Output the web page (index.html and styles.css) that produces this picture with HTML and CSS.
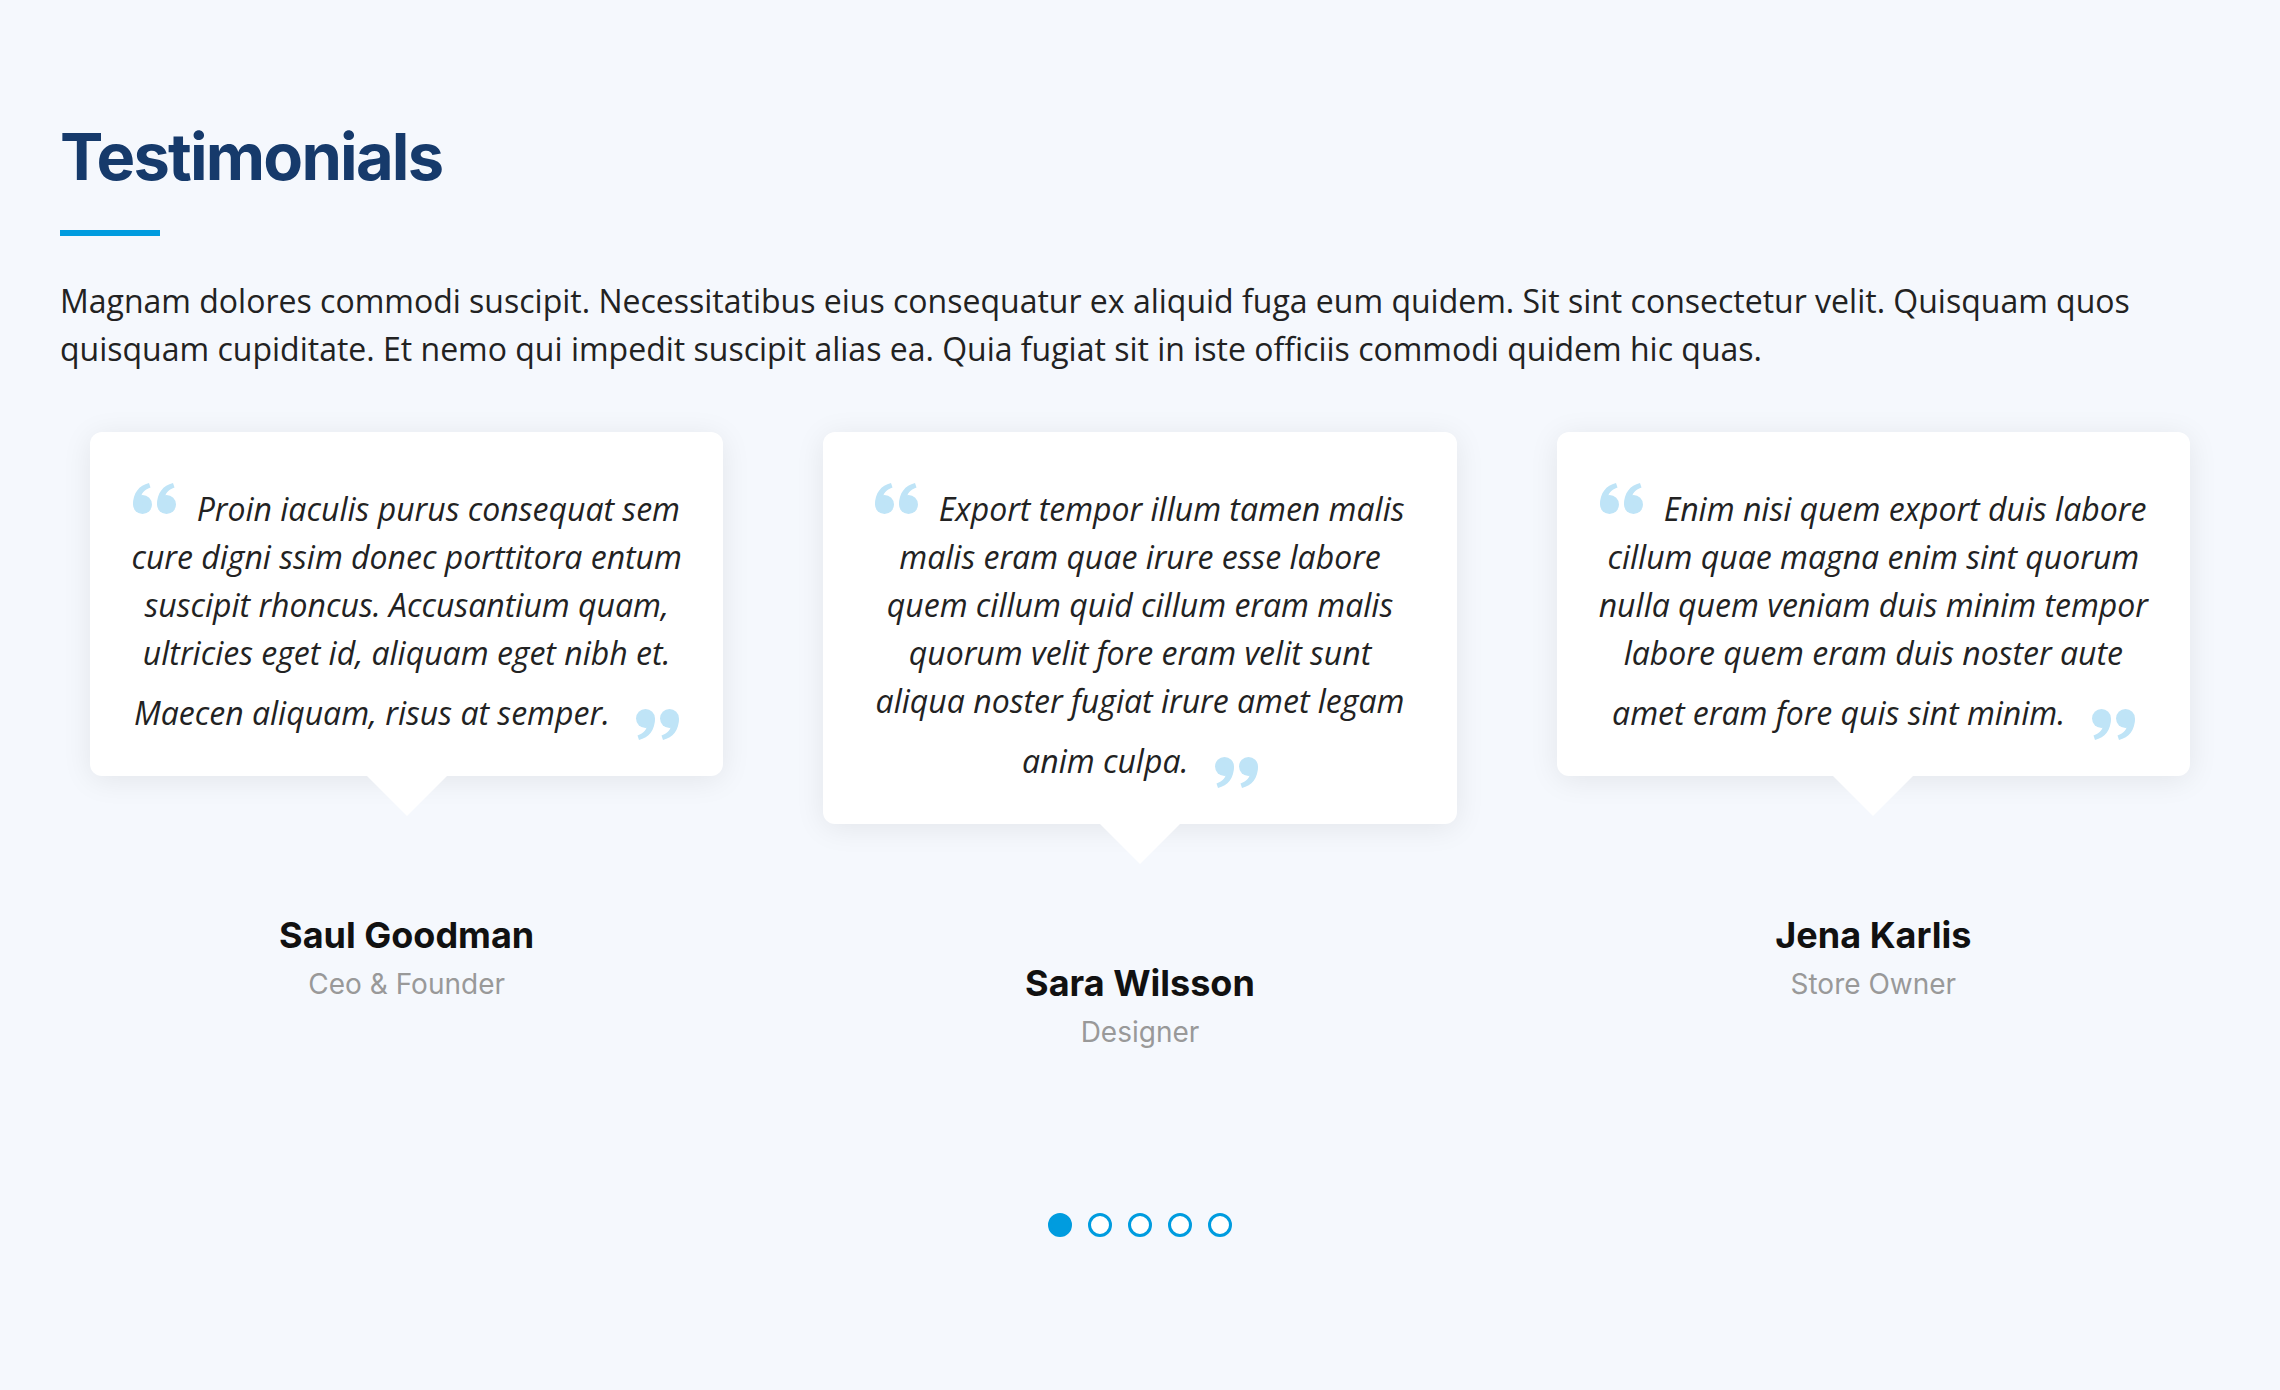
FILE: index.html
```html
<!DOCTYPE html>
<html lang="en">
<head>
<meta charset="utf-8">
<title>Testimonials</title>
<link rel="stylesheet" href="styles.css">
</head>
<body>
<section class="testimonials">
  <div class="container">
    <div class="section-title">
      <h2>Testimonials</h2>
      <p>Magnam dolores commodi suscipit. Necessitatibus eius consequatur ex aliquid fuga eum quidem. Sit sint consectetur velit. Quisquam quos quisquam cupiditate. Et nemo qui impedit suscipit alias ea. Quia fugiat sit in iste officiis commodi quidem hic quas.</p>
    </div>

    <div class="carousel">
      <div class="item">
        <p class="quote">
          <svg class="q-left" viewBox="0 0 45 31" width="45" height="31" aria-hidden="true"><g fill="#bfe4f7"><circle cx="9.5" cy="21.5" r="9.5"/><path d="M0 21.5C0 10 6 2.5 16 0L17.5 4.5C11 7 8 11 8.5 14L9.5 21.5Z"/><circle cx="33.5" cy="21.5" r="9.5"/><path d="M24 21.5C24 10 30 2.5 40 0L41.5 4.5C35 7 32 11 32.5 14L33.5 21.5Z"/></g></svg>
          Proin iaculis purus consequat sem cure digni ssim donec porttitora entum suscipit rhoncus. Accusantium quam, ultricies eget id, aliquam eget nibh et. Maecen aliquam, risus at semper.
          <svg class="q-right" viewBox="0 0 45 31" width="45" height="31" aria-hidden="true"><g fill="#bfe4f7" transform="rotate(180 22.5 15.5)"><circle cx="9.5" cy="21.5" r="9.5"/><path d="M0 21.5C0 10 6 2.5 16 0L17.5 4.5C11 7 8 11 8.5 14L9.5 21.5Z"/><circle cx="33.5" cy="21.5" r="9.5"/><path d="M24 21.5C24 10 30 2.5 40 0L41.5 4.5C35 7 32 11 32.5 14L33.5 21.5Z"/></g></svg>
        </p>
        <h3>Saul Goodman</h3>
        <h4>Ceo &amp; Founder</h4>
      </div>

      <div class="item">
        <p class="quote">
          <svg class="q-left" viewBox="0 0 45 31" width="45" height="31" aria-hidden="true"><g fill="#bfe4f7"><circle cx="9.5" cy="21.5" r="9.5"/><path d="M0 21.5C0 10 6 2.5 16 0L17.5 4.5C11 7 8 11 8.5 14L9.5 21.5Z"/><circle cx="33.5" cy="21.5" r="9.5"/><path d="M24 21.5C24 10 30 2.5 40 0L41.5 4.5C35 7 32 11 32.5 14L33.5 21.5Z"/></g></svg>
          Export tempor illum tamen malis malis eram quae irure esse labore quem cillum quid cillum eram malis quorum velit fore eram velit sunt aliqua noster fugiat irure amet legam anim culpa.
          <svg class="q-right" viewBox="0 0 45 31" width="45" height="31" aria-hidden="true"><g fill="#bfe4f7" transform="rotate(180 22.5 15.5)"><circle cx="9.5" cy="21.5" r="9.5"/><path d="M0 21.5C0 10 6 2.5 16 0L17.5 4.5C11 7 8 11 8.5 14L9.5 21.5Z"/><circle cx="33.5" cy="21.5" r="9.5"/><path d="M24 21.5C24 10 30 2.5 40 0L41.5 4.5C35 7 32 11 32.5 14L33.5 21.5Z"/></g></svg>
        </p>
        <h3>Sara Wilsson</h3>
        <h4>Designer</h4>
      </div>

      <div class="item">
        <p class="quote">
          <svg class="q-left" viewBox="0 0 45 31" width="45" height="31" aria-hidden="true"><g fill="#bfe4f7"><circle cx="9.5" cy="21.5" r="9.5"/><path d="M0 21.5C0 10 6 2.5 16 0L17.5 4.5C11 7 8 11 8.5 14L9.5 21.5Z"/><circle cx="33.5" cy="21.5" r="9.5"/><path d="M24 21.5C24 10 30 2.5 40 0L41.5 4.5C35 7 32 11 32.5 14L33.5 21.5Z"/></g></svg>
          Enim nisi quem export duis labore cillum quae magna enim sint quorum nulla quem veniam duis minim tempor labore quem eram duis noster aute amet eram fore quis sint minim.
          <svg class="q-right" viewBox="0 0 45 31" width="45" height="31" aria-hidden="true"><g fill="#bfe4f7" transform="rotate(180 22.5 15.5)"><circle cx="9.5" cy="21.5" r="9.5"/><path d="M0 21.5C0 10 6 2.5 16 0L17.5 4.5C11 7 8 11 8.5 14L9.5 21.5Z"/><circle cx="33.5" cy="21.5" r="9.5"/><path d="M24 21.5C24 10 30 2.5 40 0L41.5 4.5C35 7 32 11 32.5 14L33.5 21.5Z"/></g></svg>
        </p>
        <h3>Jena Karlis</h3>
        <h4>Store Owner</h4>
      </div>
    </div>

    <div class="dots">
      <span class="dot active"></span>
      <span class="dot"></span>
      <span class="dot"></span>
      <span class="dot"></span>
      <span class="dot"></span>
    </div>
  </div>
</section>
</body>
</html>
```

FILE: styles.css
```css
* { box-sizing: border-box; }

html, body {
  margin: 0;
  padding: 0;
  background: #f5f8fd;
}

body {
  font-family: "Open Sans", "Liberation Sans", sans-serif;
  color: #222;
  min-height: 1390px;
}

.testimonials {
  padding: 118px 60px 120px;
}

.section-title h2 {
  position: relative;
  margin: 0;
  padding-bottom: 40px;
  font-family: Inter, "Open Sans", sans-serif;
  font-size: 65px;
  line-height: 78px;
  font-weight: 700;
  color: #163a6b;
  letter-spacing: -1.8px;
}

.section-title h2::after {
  content: "";
  position: absolute;
  left: 0;
  bottom: 0;
  width: 100px;
  height: 6px;
  background: #009cdf;
}

.section-title p {
  margin: 41px 0 0;
  font-size: 32px;
  line-height: 48px;
  color: #222;
}

.carousel {
  display: grid;
  grid-template-columns: repeat(3, 1fr);
  column-gap: 100px;
  align-items: start;
  padding: 0 30px;
  margin-top: 59px;
}

.item {
  text-align: center;
}

.quote {
  position: relative;
  margin: 0;
  padding: 51px 38px 36px;
  background: #fff;
  border-radius: 12px;
  box-shadow: 0 4px 30px rgba(0, 0, 0, 0.08);
  font-style: italic;
  font-size: 32px;
  line-height: 48px;
  color: #222;
}

.quote::after {
  content: "";
  position: absolute;
  left: calc(50% - 40px);
  bottom: -40px;
  width: 0;
  height: 0;
  border-top: 40px solid #fff;
  border-left: 40px solid transparent;
  border-right: 40px solid transparent;
}

.q-left {
  display: inline-block;
  vertical-align: 7px;
  margin-right: 10px;
}

.q-right {
  display: inline-block;
  vertical-align: -15px;
  margin-top: 32px;
  margin-left: 16px;
}

.item h3 {
  margin: 138px 0 0;
  font-family: Inter, "Open Sans", sans-serif;
  font-size: 36px;
  line-height: 1.2;
  font-weight: 700;
  color: #111;
}

.item h4 {
  margin: 11px 0 0;
  font-family: Inter, "Open Sans", sans-serif;
  font-size: 28px;
  line-height: 1.2;
  font-weight: 400;
  color: #999;
}

.dots {
  display: flex;
  justify-content: center;
  gap: 16px;
  margin-top: 163px;
}

.dot {
  width: 24px;
  height: 24px;
  border-radius: 50%;
  border: 3px solid #009cdf;
  background: #fff;
}

.dot.active {
  background: #009cdf;
}
```
